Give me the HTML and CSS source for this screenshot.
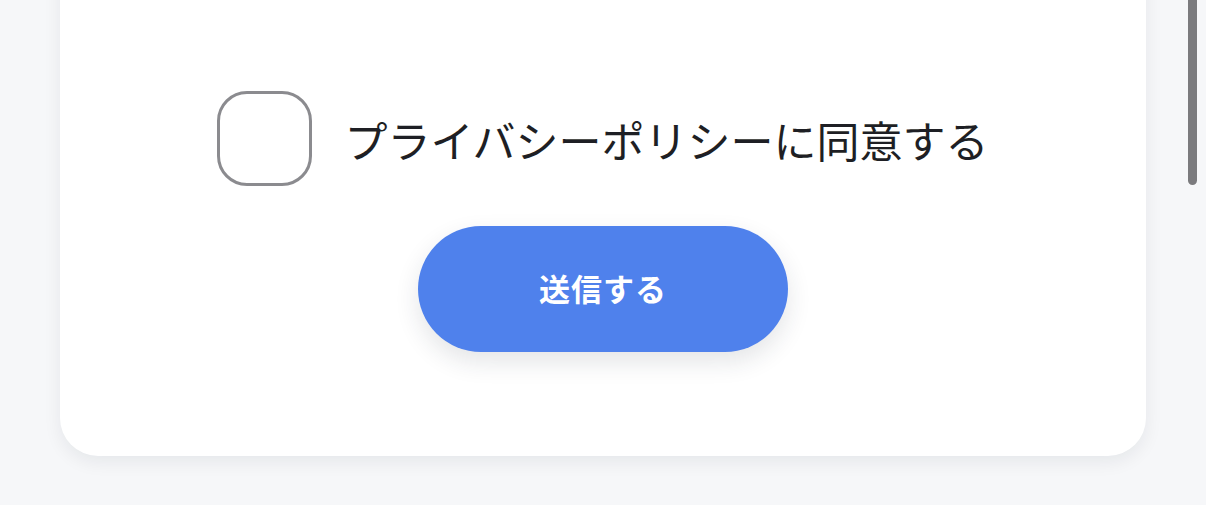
FILE: index.html
```html
<!DOCTYPE html>
<html lang="ja">
<head>
<meta charset="utf-8">
<link rel="stylesheet" href="styles.css">
</head>
<body>
<div class="page">
  <div class="card">
    <label class="agree">
      <span class="box"></span>
      <span class="agree-text">プライバシーポリシーに同意する</span>
    </label>
    <button class="submit" type="button">送信する</button>
  </div>
</div>
<div class="scrollbar"></div>
</body>
</html>
```
FILE: styles.css
```css
html, body {
  margin: 0;
  padding: 0;
  height: 100%;
  overflow: hidden;
}
body {
  background: #f6f7f9;
  font-family: "Noto Sans CJK JP", "Noto Sans", sans-serif;
}
.page {
  padding: 0 60px;
}
.card {
  margin-top: -40px;
  background: #ffffff;
  border-radius: 0 0 38px 38px;
  box-shadow: 0 6px 18px rgba(20, 30, 40, 0.07);
  padding: 131px 0 104px;
  display: flex;
  flex-direction: column;
  align-items: center;
  gap: 40px;
}
.agree {
  display: flex;
  align-items: center;
  gap: 32px;
}
.box {
  width: 89px;
  height: 89px;
  border: 3px solid #8b8b8f;
  border-radius: 30px;
  box-sizing: content-box;
}
.agree-text {
  font-size: 43px;
  line-height: 1;
  color: #1e1f24;
  letter-spacing: 0;
  margin-top: 2px;
}
.submit {
  width: 370px;
  height: 126px;
  border: none;
  border-radius: 63px;
  background: #4f81ec;
  color: #ffffff;
  font-family: "Noto Sans CJK JP", "Noto Sans", sans-serif;
  font-size: 31px;
  font-weight: 700;
  letter-spacing: 1px;
  padding: 0 0 3px;
  box-shadow: 0 10px 24px rgba(30, 40, 60, 0.12);
}
.scrollbar {
  position: fixed;
  top: 0;
  right: 9px;
  width: 9px;
  height: 185px;
  background: #7b7b7e;
  border-radius: 0 0 5px 5px;
}
```
